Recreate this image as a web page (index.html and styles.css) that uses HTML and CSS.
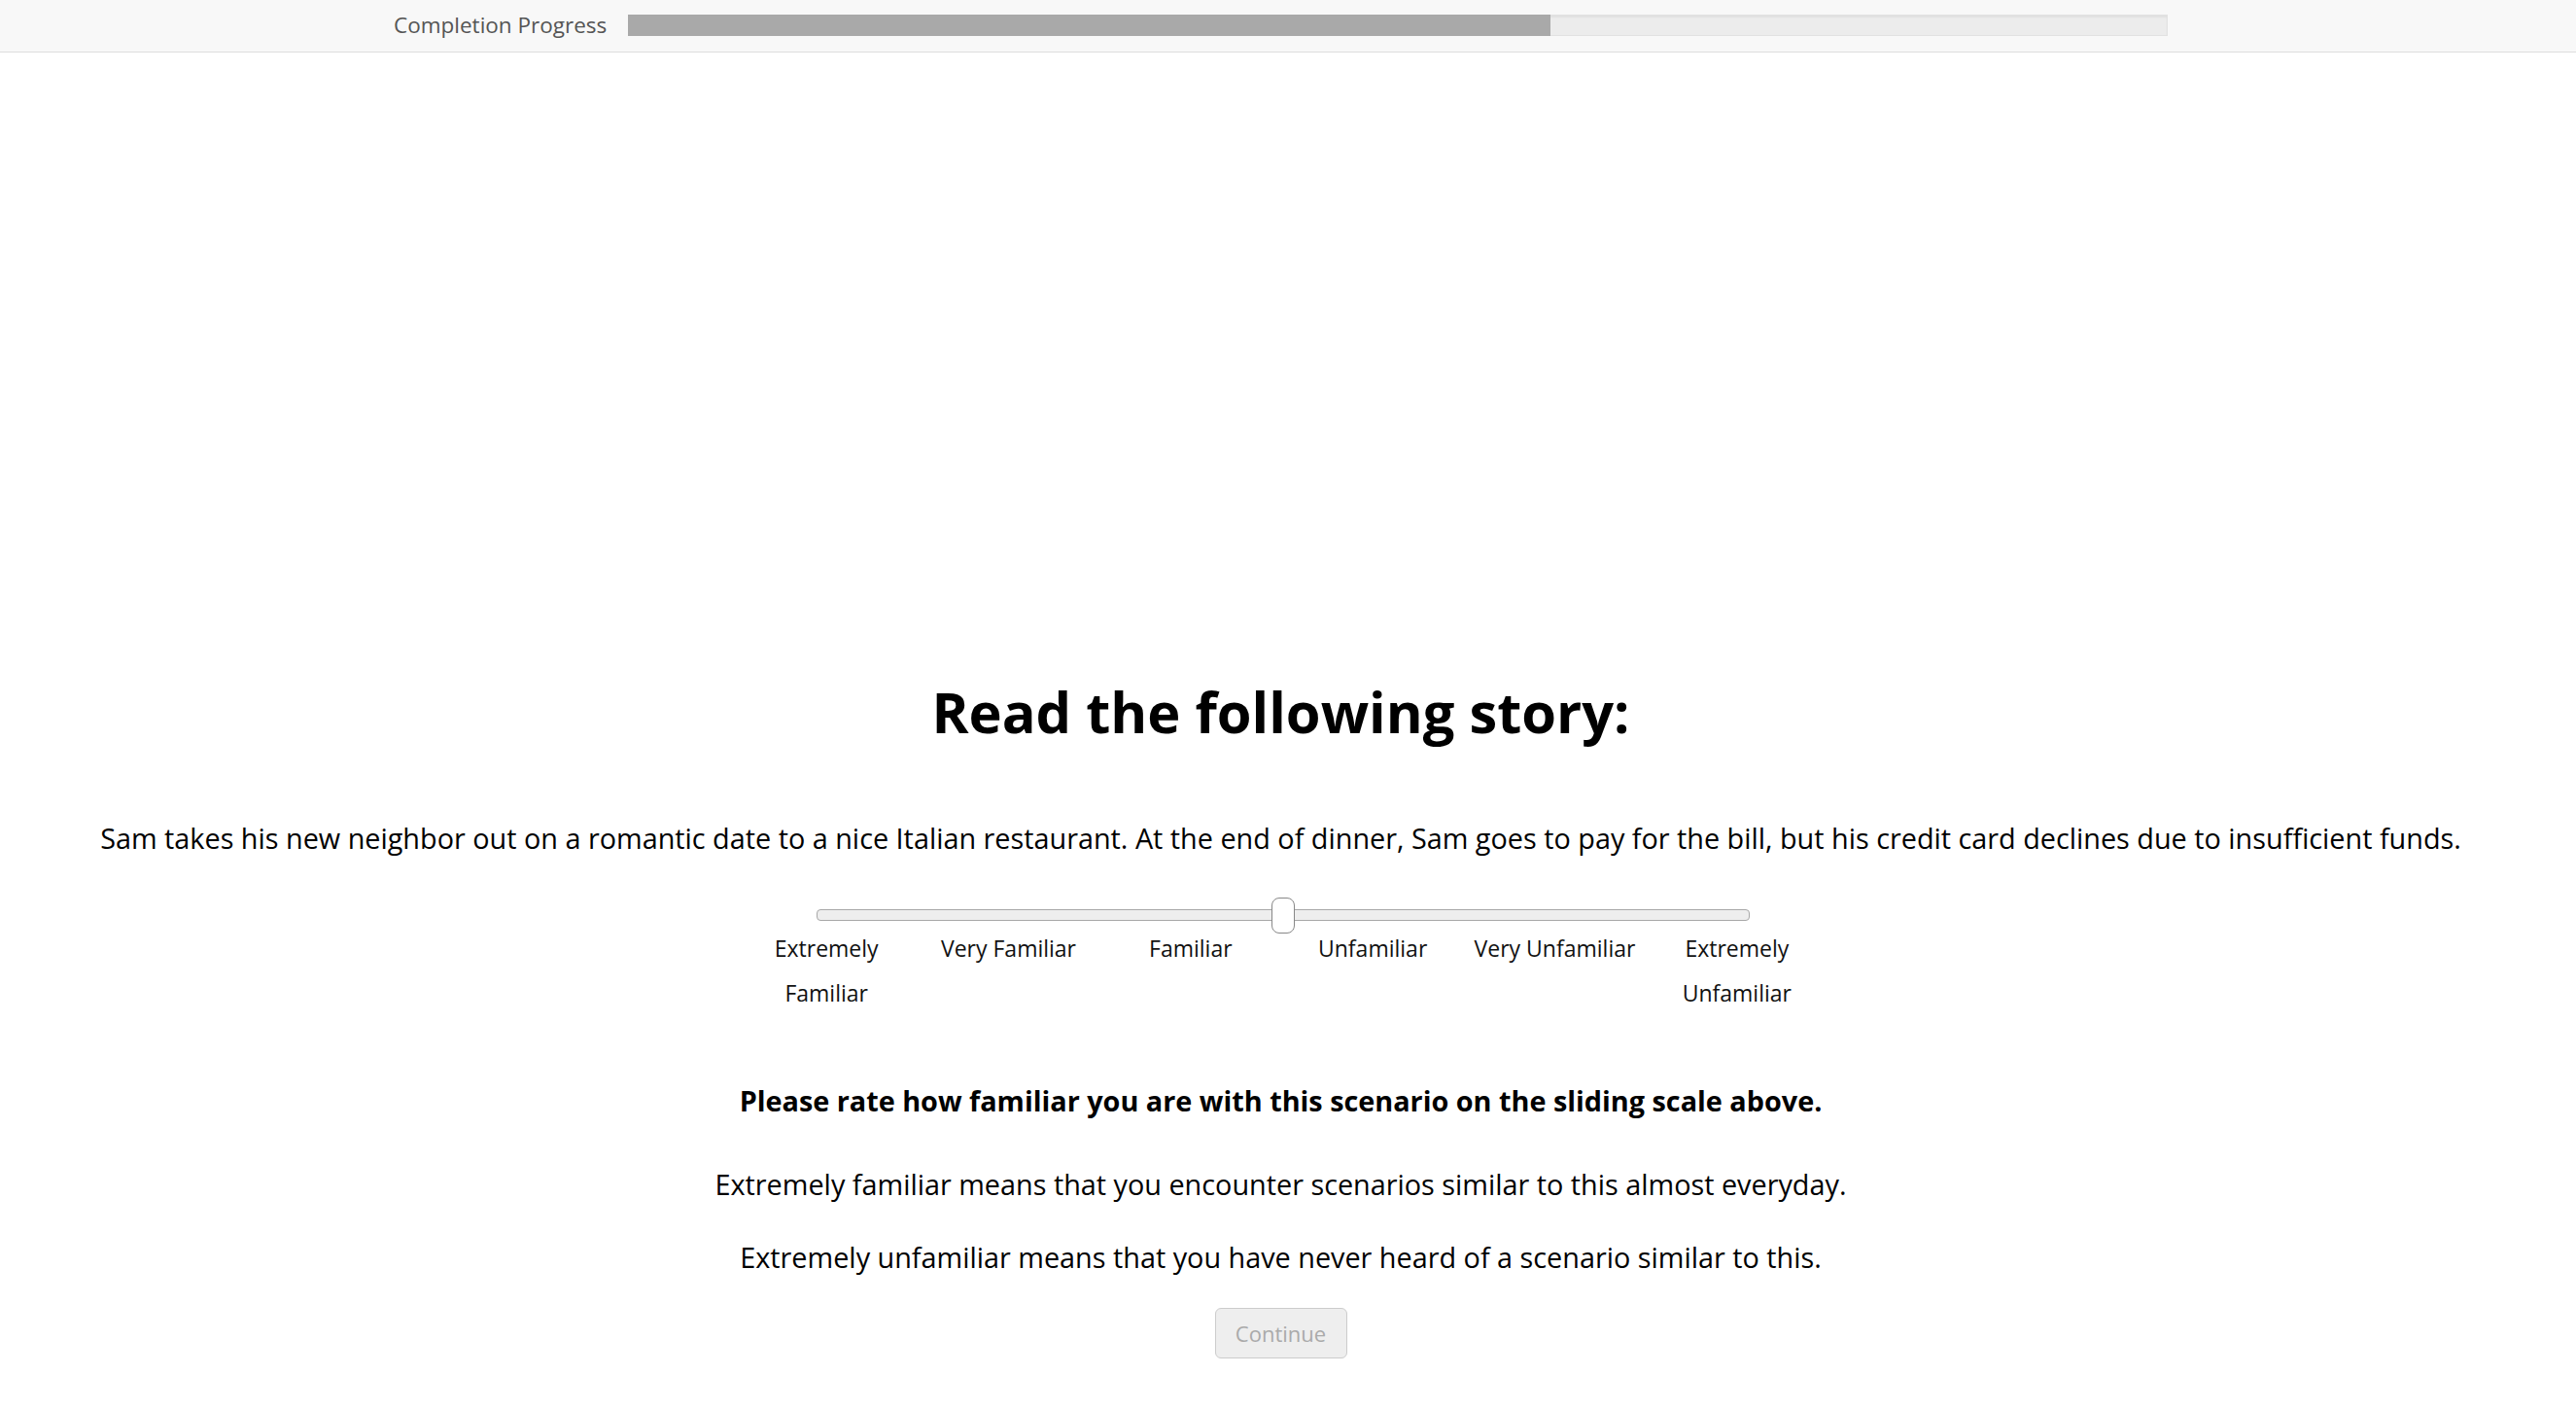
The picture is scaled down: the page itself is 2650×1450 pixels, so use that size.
FILE: index.html
```html
<!DOCTYPE html>
<html>
<head>
<meta charset="utf-8">
<link rel="stylesheet" href="styles.css">
</head>
<body>
<header class="topbar">
  <div class="topbar-inner">
    <span class="progress-label">Completion Progress</span>
    <div class="progress-track"><div class="progress-fill" style="width:60%"></div></div>
  </div>
</header>
<main class="page">
  <h1 class="title">Read the following story:</h1>
  <p class="story">Sam takes his new neighbor out on a romantic date to a nice Italian restaurant. At the end of dinner, Sam goes to pay for the bill, but his credit card declines due to insufficient funds.</p>
  <div class="scale">
    <div class="slider">
      <div class="slider-track"></div>
      <div class="slider-thumb"></div>
    </div>
    <div class="labels">
      <span class="label">Extremely Familiar</span>
      <span class="label">Very Familiar</span>
      <span class="label">Familiar</span>
      <span class="label">Unfamiliar</span>
      <span class="label">Very Unfamiliar</span>
      <span class="label">Extremely Unfamiliar</span>
    </div>
  </div>
  <p class="instruction">Please rate how familiar you are with this scenario on the sliding scale above.</p>
  <p class="note note-first">Extremely familiar means that you encounter scenarios similar to this almost everyday.</p>
  <p class="note note-second">Extremely unfamiliar means that you have never heard of a scenario similar to this.</p>
  <div class="actions"><button class="continue" disabled>Continue</button></div>
</main>
</body>
</html>
```
FILE: styles.css
```css
html, body {
  margin: 0;
  padding: 0;
  background: #ffffff;
  font-family: "Open Sans", "Liberation Sans", sans-serif;
  color: #000;
}
body {
  padding-right: 15px;
}
.topbar {
  height: 53px;
  background: #f8f8f8;
  border-bottom: 1px solid #dddddd;
  margin-right: -15px;
  padding-right: 15px;
}
.topbar-inner {
  width: 1825px;
  margin: 0 auto;
  height: 53px;
  display: flex;
  align-items: center;
  gap: 22px;
}
.progress-label {
  font-size: 22.5px;
  color: #555;
  white-space: nowrap;
  position: relative;
  top: -1px;
}
.progress-track {
  flex: 1;
  height: 22px;
  box-sizing: border-box;
  background: #ececec;
  border: 1px solid #e2e2e2;
  box-shadow: inset 0 2px 2px rgba(0,0,0,0.05);
  position: relative;
  top: -0.5px;
}
.progress-fill {
  height: 22px;
  margin: -1px 0 0 -1px;
  background: #a9a9a9;
}
.page {
  padding-top: 643px;
  text-align: center;
}
.title {
  margin: 0;
  font-size: 57.8px;
  line-height: 70px;
  font-weight: 700;
}
.story {
  margin: 75px 0 0;
  font-size: 28.8px;
  line-height: 40px;
}
.scale {
  width: 1124px;
  margin: 53px auto 0;
  padding-left: 2px;
}
.slider {
  position: relative;
  width: 960px;
  height: 12px;
  margin: 0 auto;
  padding-left: 3px;
}
.slider-track {
  height: 12px;
  box-sizing: border-box;
  background: #eeeeee;
  border: 1px solid #a8a8a8;
  border-radius: 4px;
}
.slider-thumb {
  position: absolute;
  left: 471px;
  top: -12.5px;
  width: 24px;
  height: 37px;
  box-sizing: border-box;
  background: #fff;
  border: 1.5px solid #888;
  border-radius: 8px;
}
.labels {
  display: grid;
  grid-template-columns: repeat(6, 1fr);
  margin-top: 5px;
}
.label {
  font-size: 23px;
  line-height: 46px;
  color: #111;
}
.instruction {
  margin: 68px 0 0;
  font-size: 28.8px;
  line-height: 40px;
  font-weight: 700;
}
.note {
  font-size: 28.8px;
  line-height: 40px;
  margin: 0;
}
.note-first {
  margin-top: 46px;
}
.note-second {
  margin-top: 35px;
}
.actions {
  margin-top: 32px;
}
.continue {
  width: 136px;
  height: 52px;
  box-sizing: border-box;
  font-family: "Open Sans", "Liberation Sans", sans-serif;
  font-size: 22px;
  color: #aaa;
  background: #eeeeee;
  border: 1.5px solid #cccccc;
  border-radius: 6px;
  padding: 0;
}
```
